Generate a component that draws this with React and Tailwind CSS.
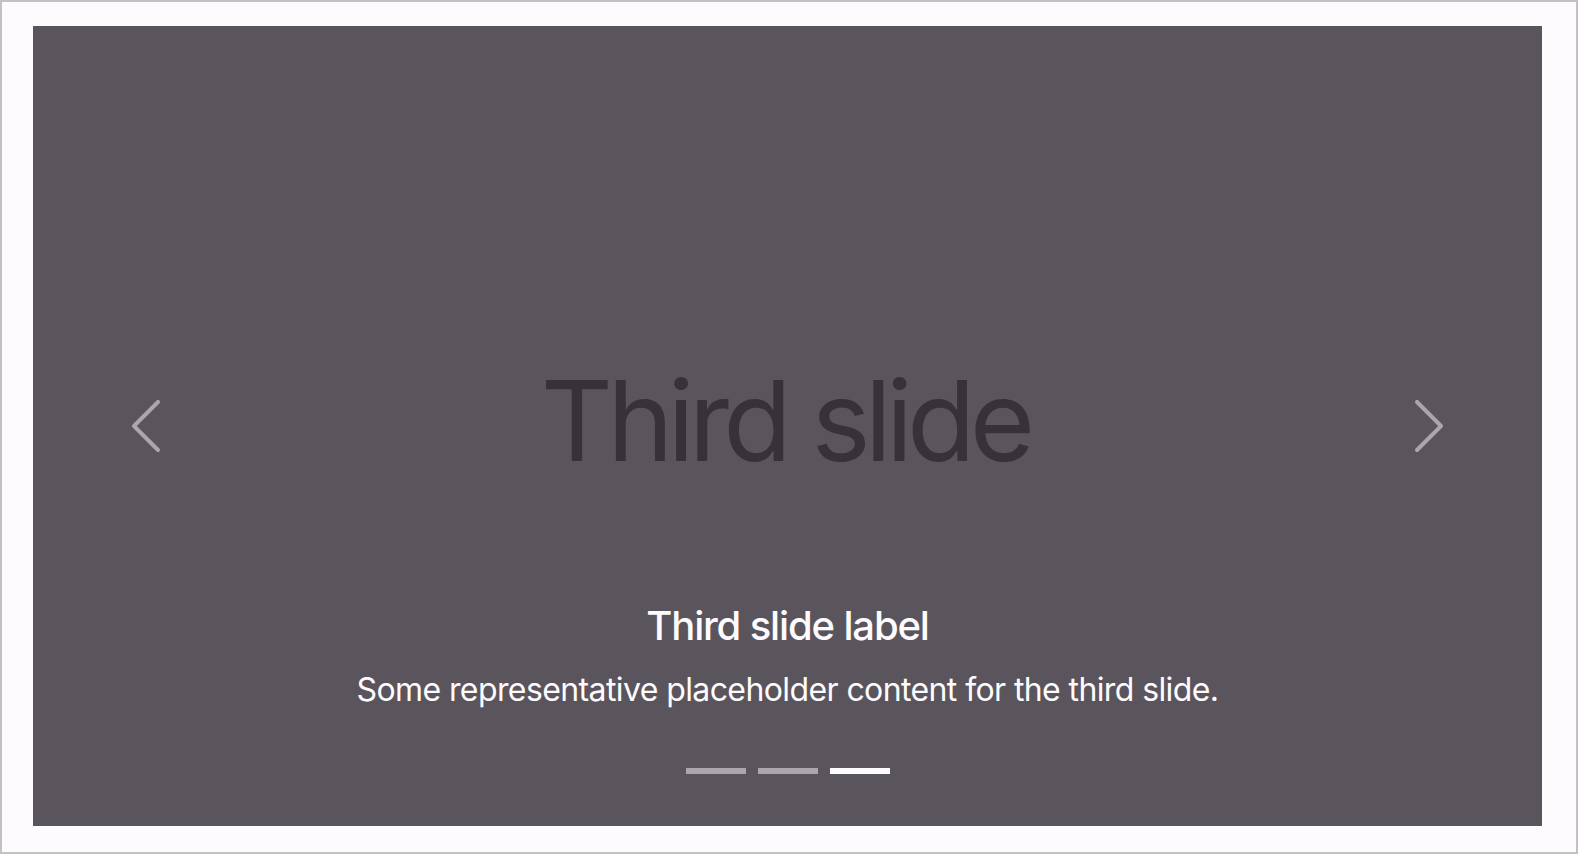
import React from "react";

const Chevron = ({ dir }) => (
  <svg viewBox="0 0 16 16" className="w-16 h-16" fill="#aba6ad">
    {dir === "prev" ? (
      <path d="M11.354 1.646a.5.5 0 0 1 0 .708L5.707 8l5.647 5.646a.5.5 0 0 1-.708.708l-6-6a.5.5 0 0 1 0-.708l6-6a.5.5 0 0 1 .708 0z" />
    ) : (
      <path d="M4.646 1.646a.5.5 0 0 1 .708 0l6 6a.5.5 0 0 1 0 .708l-6 6a.5.5 0 0 1-.708-.708L10.293 8 4.646 2.354a.5.5 0 0 1 0-.708z" />
    )}
  </svg>
);

const App = () => {
  const active = 2;

  return (
    <div
      className="w-[1578px] h-[854px] border-2 border-[#c5c0c5] bg-[#fefbfe] pl-[31px] pt-[24px]"
      style={{ fontFamily: "Inter, 'Noto Sans', sans-serif" }}
    >
      <div className="relative w-[1509px] h-[800px] bg-[#5a555c] overflow-hidden">
        {/* slide placeholder */}
        <div className="flex items-center justify-center h-full pb-[13px] pr-[5px]">
          <span className="text-[112px] leading-none text-[#373239] tracking-[-5.9px]">
            Third slide
          </span>
        </div>

        {/* caption */}
        <div className="absolute left-[15%] right-[15%] bottom-[40px] py-[40px] text-center text-[#fefbfe]">
          <h5 className="text-[40px] leading-[1.2] font-medium mb-[16px] tracking-[-1.15px]">
            Third slide label
          </h5>
          <p className="text-[32px] leading-[1.5] mb-[32px] tracking-[-0.6px]">
            Some representative placeholder content for the third slide.
          </p>
        </div>

        {/* controls */}
        <button className="absolute left-0 top-0 bottom-0 w-[15%] flex items-center justify-center">
          <Chevron dir="prev" />
        </button>
        <button className="absolute right-0 top-0 bottom-0 w-[15%] flex items-center justify-center">
          <Chevron dir="next" />
        </button>

        {/* indicators */}
        <div className="absolute left-0 right-0 bottom-0 mb-[32px] flex justify-center">
          {[0, 1, 2].map((i) => (
            <span
              key={i}
              className={`w-[60px] h-[46px] mx-[6px] border-y-[20px] border-transparent bg-clip-padding ${
                i === active ? "bg-[#fefbfe]" : "bg-[#aba6ad]"
              }`}
            />
          ))}
        </div>
      </div>
    </div>
  );
};

export default App;
